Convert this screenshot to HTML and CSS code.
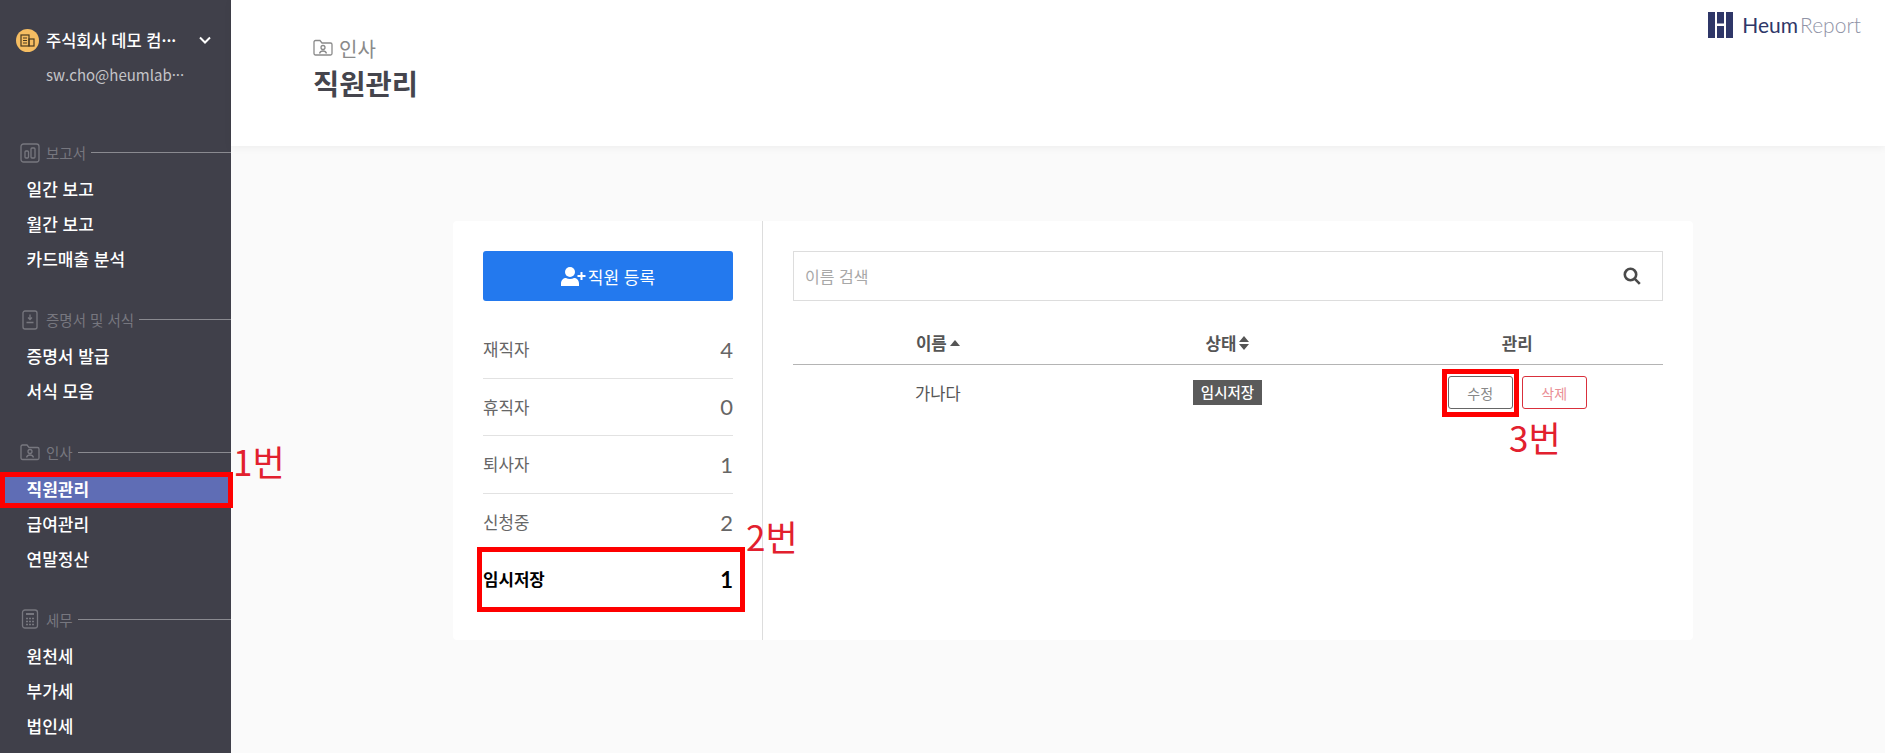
FILE: index.html
```html
<!DOCTYPE html>
<html lang="ko">
<head>
<meta charset="utf-8">
<title>직원관리</title>
<link rel="stylesheet" href="styles.css">
</head>
<body>
<div class="app">
  <aside class="sidebar">
    <div class="account">
      <div class="company">
        <span class="avatar">
          <svg width="15" height="13" viewBox="0 0 15 13" fill="none" stroke="#4a3a20" stroke-width="1.2"><rect x="1" y="1" width="8" height="11"/><rect x="9" y="5" width="5" height="7"/><path d="M3 4h4M3 6.500h4M3 9h4"/></svg>
        </span>
        <span class="company-name">주식회사 데모 컴···</span>
        <svg class="chevron" width="12" height="8" viewBox="0 0 12 8" fill="none" stroke="#fff" stroke-width="2"><path d="M1 1.500l5 5 5-5"/></svg>
      </div>
      <div class="email">sw.cho@heumlab···</div>
    </div>
    <nav class="nav">
      <section class="nav-section">
        <div class="nav-label">
          <svg class="nav-icon" width="20" height="20" viewBox="0 0 20 20" fill="none" stroke="#77777f" stroke-width="1.300"><rect x="1" y="1" width="18" height="18" rx="2.500"/><rect x="5" y="8" width="3.500" height="7" rx="1"/><rect x="11" y="5" width="4" height="10" rx="1"/></svg>
          <span>보고서</span><i class="nav-rule"></i>
        </div>
        <a class="nav-item">일간 보고</a>
        <a class="nav-item">월간 보고</a>
        <a class="nav-item">카드매출 분석</a>
      </section>
      <section class="nav-section">
        <div class="nav-label">
          <svg class="nav-icon" width="20" height="20" viewBox="0 0 20 20" fill="none" stroke="#77777f" stroke-width="1.300"><rect x="3" y="1" width="14" height="18" rx="2"/><path d="M10 4.500v5M8 7.500l2 2 2-2M6.500 12.500h7"/></svg>
          <span>증명서 및 서식</span><i class="nav-rule"></i>
        </div>
        <a class="nav-item">증명서 발급</a>
        <a class="nav-item">서식 모음</a>
      </section>
      <section class="nav-section">
        <div class="nav-label">
          <svg class="nav-icon" width="20" height="20" viewBox="0 0 20 20" fill="none" stroke="#77777f" stroke-width="1.300"><path d="M1 4.500a1.500 1.500 0 0 1 1.500-1.500h4.500l2 2.500h8.500a1.500 1.500 0 0 1 1.500 1.500v9a1.500 1.500 0 0 1-1.500 1.500h-15a1.500 1.500 0 0 1-1.500-1.500z"/><circle cx="10" cy="9.500" r="2"/><path d="M6.500 15.500c.5-2 2-2.500 3.500-2.500s3 .5 3.500 2.500"/></svg>
          <span>인사</span><i class="nav-rule"></i>
        </div>
        <a class="nav-item is-active">직원관리</a>
        <a class="nav-item">급여관리</a>
        <a class="nav-item">연말정산</a>
      </section>
      <section class="nav-section">
        <div class="nav-label">
          <svg class="nav-icon" width="20" height="20" viewBox="0 0 20 20" fill="none" stroke="#77777f" stroke-width="1.300"><rect x="2.500" y="1" width="15" height="18" rx="2.500"/><path d="M6 5h8" stroke-width="2"/><path d="M6 9.500h2M9 9.500h2M12 9.500h2M6 12.500h2M9 12.500h2M12 12.500h2M6 15.500h2M9 15.500h2M12 15.500h2" stroke-width="1.600"/></svg>
          <span>세무</span><i class="nav-rule"></i>
        </div>
        <a class="nav-item">원천세</a>
        <a class="nav-item">부가세</a>
        <a class="nav-item">법인세</a>
      </section>
    </nav>
  </aside>

  <div class="main">
    <header class="topbar">
      <div class="heading">
        <div class="crumb">
          <svg width="20" height="18" viewBox="0 0 20 18" fill="none" stroke="#8a8a8a" stroke-width="1.300"><path d="M1 3a1.500 1.500 0 0 1 1.500-1.500h4.500l2 2.500h8.500a1.500 1.500 0 0 1 1.500 1.500v9a1.500 1.500 0 0 1-1.500 1.500h-15a1.500 1.500 0 0 1-1.500-1.500z"/><circle cx="10" cy="8.500" r="2"/><path d="M6.500 14.500c.5-2 2-2.500 3.500-2.500s3 .5 3.500 2.500"/></svg>
          <span>인사</span>
        </div>
        <h1 class="title">직원관리</h1>
      </div>
      <div class="logo">
        <svg width="25" height="26" viewBox="0 0 25 26" fill="#2f3768"><rect width="7" height="26"/><rect x="9" width="7" height="11.500"/><rect x="9" y="14" width="7" height="12"/><rect x="18" width="7" height="26"/></svg>
        <span class="logo-text"><b>Heum</b><span>Report</span></span>
      </div>
    </header>

    <main class="content">
      <div class="card">
        <div class="panel-left">
          <button class="btn-primary">
            <svg width="25" height="19" viewBox="0 0 25 19" fill="#fff"><circle cx="9" cy="5" r="5"/><path d="M0 19v-2.500c0-3.500 2.500-5.500 5-5.500 1.200.6 2.500 1 4 1s2.800-.4 4-1c2.500 0 5 2 5 5.500v2.500z"/><path d="M19.500 5h2v3h3v2h-3v3h-2v-3h-3v-2h3z"/></svg>
            <span>직원 등록</span>
          </button>
          <ul class="stats">
            <li class="stat"><span>재직자</span><span class="num">4</span></li>
            <li class="stat"><span>휴직자</span><span class="num">0</span></li>
            <li class="stat"><span>퇴사자</span><span class="num">1</span></li>
            <li class="stat"><span>신청중</span><span class="num">2</span></li>
            <li class="stat is-current"><span>임시저장</span><span class="num">1</span></li>
          </ul>
        </div>
        <div class="panel-right">
          <div class="search">
            <span class="placeholder">이름 검색</span>
            <svg width="18" height="18" viewBox="0 0 18 18" fill="none" stroke="#4a4a4a" stroke-width="2.600"><circle cx="7.500" cy="7.500" r="5.700"/><path d="M11.800 11.800l5 5"/></svg>
          </div>
          <div class="table-head">
            <div class="cell">이름<svg width="10" height="6" viewBox="0 0 10 6" fill="#555"><path d="M5 0l5 6H0z"/></svg></div>
            <div class="cell">상태<svg width="10" height="14" viewBox="0 0 10 14" fill="#555"><path d="M5 0l5 6H0zM5 14L0 8h10z"/></svg></div>
            <div class="cell">관리</div>
          </div>
          <div class="table-row">
            <div class="cell">가나다</div>
            <div class="cell"><span class="badge">임시저장</span></div>
            <div class="cell actions"><button class="btn-edit">수정</button><button class="btn-delete">삭제</button></div>
          </div>
        </div>
      </div>
    </main>
  </div>
</div>

<div class="mark mark-nav"></div>
<div class="mark mark-stat"></div>
<div class="mark mark-edit"></div>
<span class="note note-1">1번</span>
<span class="note note-2">2번</span>
<span class="note note-3">3번</span>
</body>
</html>
```

FILE: styles.css
```css
* { box-sizing: border-box; }
html, body { margin: 0; height: 100%; overflow: hidden; }
body {
  font-family: "Noto Sans CJK KR", "Noto Sans", sans-serif;
  background: #fafafa;
  color: #555;
}
.app { display: flex; height: 753px; overflow: hidden; }

/* Sidebar */
.sidebar { width: 231px; flex: none; background: #40404a; color: #fff; }
.account { height: 140px; padding: 28px 0 0 16px; }
.company { display: flex; align-items: center; height: 24px; }
.avatar {
  width: 23px; height: 23px; flex: none; border-radius: 50%;
  background: #f5bd62; display: flex; align-items: center; justify-content: center;
}
.company-name {
  width: 140px; margin-left: 7px; font-size: 16.500px; font-weight: 500; line-height: 24px;
  white-space: nowrap;
}
.chevron { margin-left: 13px; }
.email {
  margin: 13px 0 0 30px; font-size: 15px; line-height: 20px; color: #c4c4c8;
  white-space: nowrap;
}
.nav-section { padding-bottom: 30.300px; }
.nav-label {
  display: flex; align-items: center; height: 25px; margin-bottom: 7px;
  padding-left: 20px; font-size: 14.500px; color: #77777f; white-space: nowrap;
}
.nav-icon { flex: none; margin-right: 6px; }
.nav-rule { flex: 1; height: 1px; margin-left: 5px; background: #8a8a90; }
.nav-item {
  display: block; height: 35px; padding-left: 26.500px;
  font-size: 17px; font-weight: 500; line-height: 34px; color: #fff;
}
.nav-item.is-active { background: #5f6db5; font-weight: 700; }

/* Top bar */
.main { flex: 1; min-width: 0; }
.topbar {
  display: flex; justify-content: space-between; height: 146px; padding-left: 82px;
  background: #fff; box-shadow: 0 2px 8px rgba(0, 0, 0, .05);
}
.heading { padding-top: 33px; }
.crumb { display: flex; align-items: center; gap: 6px; height: 30px; font-size: 20px; color: #8a8a8a; }
.title { margin: 0; font-size: 28.500px; font-weight: 700; line-height: 40px; color: #45454d; }
.logo { display: flex; align-items: flex-start; gap: 9px; padding: 12px 24px 0 0; }
.logo-text { font-family: Lato, sans-serif; font-size: 21px; line-height: 26px; color: #8f93a6; font-weight: 300; }
.logo-text b { color: #2f3768; font-weight: 400; margin-right: 2px; }

/* Card */
.content { padding: 75px 0 0 222px; }
.card { display: flex; width: 1240px; height: 419px; background: #fff; border-radius: 4px; }
.panel-left { width: 310px; flex: none; padding: 30px 29px 0 30px; border-right: 1px solid #ddd; }
.btn-primary {
  display: flex; align-items: center; justify-content: center; gap: 2px;
  width: 100%; height: 50px; border: 0; border-radius: 3px;
  background: #2379ee; color: #fff; font: inherit; font-size: 17px;
}
.stats { list-style: none; margin: 20px 0 0; padding: 0; }
.stat {
  display: flex; justify-content: space-between; align-items: center; height: 57.600px;
  border-bottom: 1px solid #e2e2e2; font-size: 16.800px; color: #666;
}
.stat:last-child { border-bottom: 0; }
.num { font-family: Lato, sans-serif; font-size: 22px; color: #666; }
.stat.is-current { padding-bottom: 2px; color: #000; font-weight: 700; }
.stat.is-current .num { color: #000; font-weight: 700; }

/* Table */
.panel-right { flex: 1; padding: 30px 30px 0 30px; }
.search {
  display: flex; justify-content: space-between; align-items: center;
  height: 50px; padding: 0 21px 0 11px; border: 1px solid #ddd; background: #fff;
}
.placeholder { font-size: 16px; color: #a8a8a8; }
.table-head, .table-row { display: grid; grid-template-columns: repeat(3, 1fr); padding-right: 1px; }
.table-head { height: 64px; padding-top: 28px; border-bottom: 1px solid #b4b4b4; font-size: 16.800px; font-weight: 700; color: #555; }
.table-head .cell { gap: 3px; height: 28px; }
.cell { display: flex; align-items: center; justify-content: center; }
.table-row { height: 55px; padding-top: 11px; font-size: 16.500px; color: #555; }
.table-row .cell { height: 33px; }
.badge {
  display: block; width: 69px; height: 25px; background: #5a5a5a; color: #fff;
  font-size: 14.500px; font-weight: 500; line-height: 24px; text-align: center;
}
.actions { gap: 9px; }
.btn-edit, .btn-delete {
  width: 65px; height: 33px; padding: 0; background: #fff; border-radius: 3px;
  font: inherit; font-size: 14px;
}
.btn-edit { border: 1px solid #666; color: #888; }
.btn-delete { border: 1px solid #d9303c; color: #ea8f96; }

/* Annotations drawn over the screenshot */
.mark { position: absolute; border: 5px solid #fe0000; }
.mark-nav { left: 0; top: 472px; width: 233px; height: 36px; }
.mark-stat { left: 477px; top: 547px; width: 268px; height: 65px; }
.mark-edit { left: 1442px; top: 369px; width: 77px; height: 48px; }
.note {
  position: absolute; font-size: 35px; line-height: 40px; color: #e2202e; white-space: nowrap;
}
.note-1 { left: 233px; top: 441px; }
.note-2 { left: 746px; top: 516px; }
.note-3 { left: 1509px; top: 417px; }
```
